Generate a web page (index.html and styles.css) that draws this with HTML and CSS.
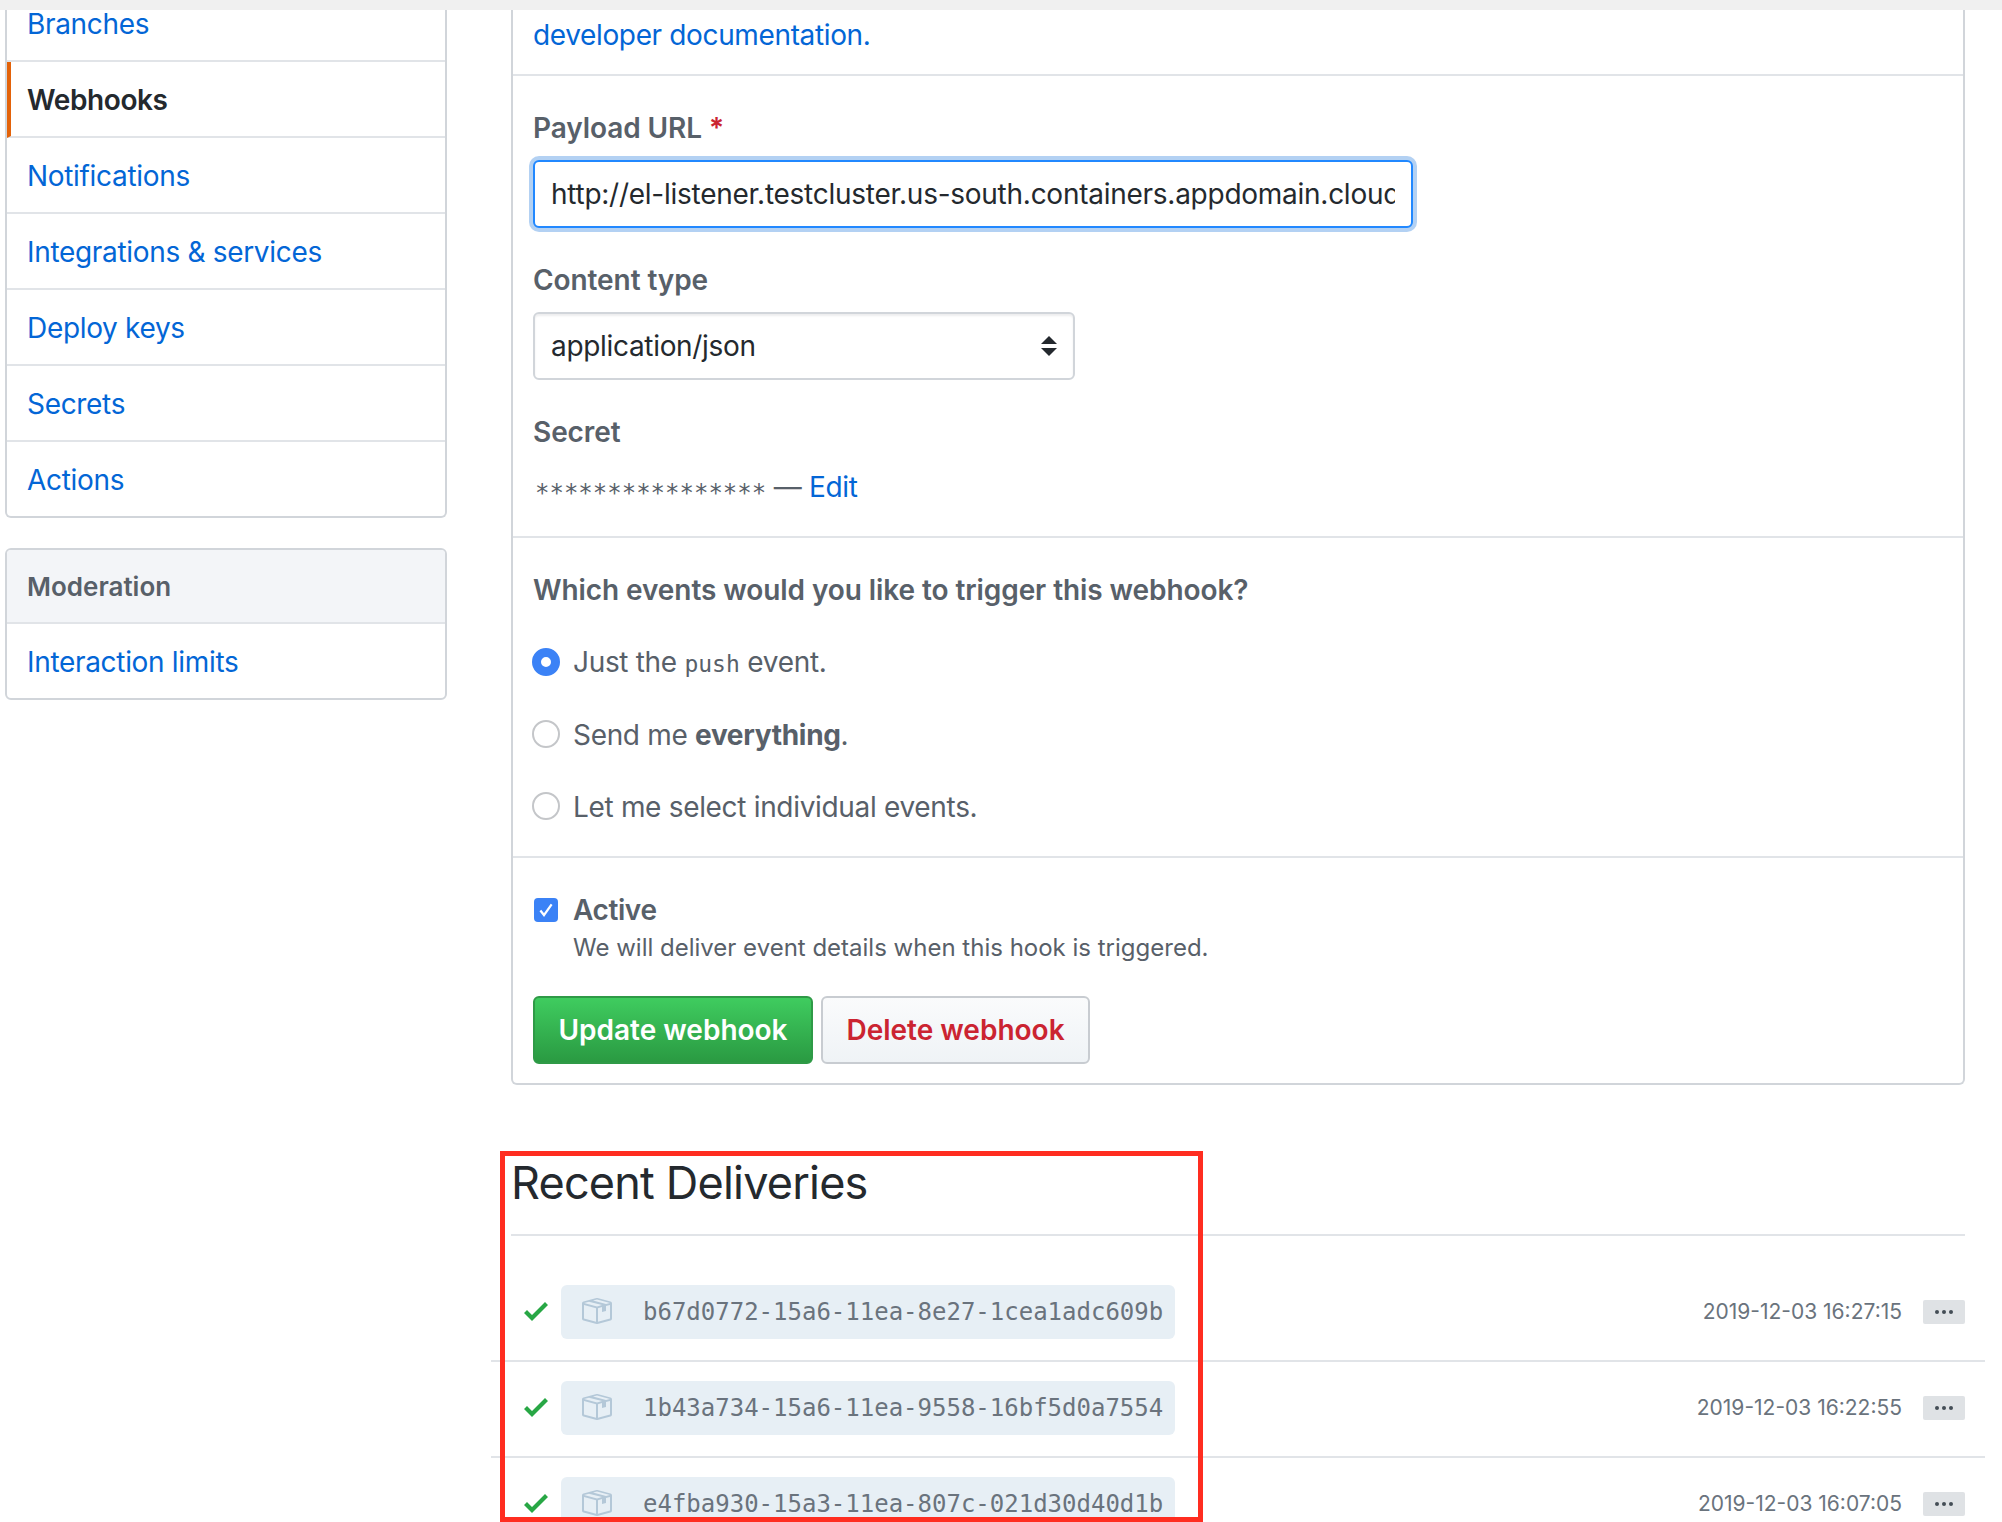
FILE: index.html
```html
<!DOCTYPE html>
<html lang="en">
<head>
    <meta charset="UTF-8">
    <title>Webhooks</title>
    <link rel="stylesheet" href="styles.css">
</head>
<body>
<div class="topband"></div>
<div class="page">
    <div class="side">
        <div class="menu menu-first">
            <a class="menu-item">Branches</a>
            <a class="menu-item selected">Webhooks</a>
            <a class="menu-item">Notifications</a>
            <a class="menu-item">Integrations &amp; services</a>
            <a class="menu-item">Deploy keys</a>
            <a class="menu-item">Secrets</a>
            <a class="menu-item">Actions</a>
        </div>
        <div class="menu">
            <div class="menu-head">Moderation</div>
            <a class="menu-item">Interaction limits</a>
        </div>
    </div>

    <div class="main">
        <div class="card">
            <div class="card-top"><a class="link">developer documentation</a>.</div>

            <div class="card-sec sec-fields">
                <div class="label">Payload URL <span class="req">*</span></div>
                <input class="url-input" type="text" value="http://el-listener.testcluster.us-south.containers.appdomain.cloud/webhook">
                <div class="label label-next">Content type</div>
                <div class="select-box">
                    <span>application/json</span>
                    <svg class="select-arrows" width="16" height="20" viewBox="0 0 16 20"><path d="M8 0l8 8H0zM8 20L0 12h16z"/></svg>
                </div>
                <div class="label label-next">Secret</div>
                <div class="secret"><span class="stars">****************</span> — <a class="link">Edit</a></div>
            </div>

            <div class="card-sec sec-events">
                <div class="label">Which events would you like to trigger this webhook?</div>
                <div class="radios">
                    <div class="radio-row"><span class="radio on"></span><span class="radio-text">Just the <code class="push">push</code> event.</span></div>
                    <div class="radio-row"><span class="radio"></span><span class="radio-text">Send me <b>everything</b>.</span></div>
                    <div class="radio-row"><span class="radio"></span><span class="radio-text">Let me select individual events.</span></div>
                </div>
            </div>

            <div class="card-sec sec-active">
                <div class="active-row">
                    <span class="check">
                        <svg width="18" height="18" viewBox="0 0 16 16"><path d="M3 8.5l3.2 4L13 3" fill="none" stroke="#fff" stroke-width="2"/></svg>
                    </span>
                    <b class="active-name">Active</b>
                </div>
                <div class="note">We will deliver event details when this hook is triggered.</div>
                <div class="buttons">
                    <button class="btn btn-green">Update webhook</button>
                    <button class="btn btn-red">Delete webhook</button>
                </div>
            </div>
        </div>

        <h2 class="title">Recent Deliveries</h2>

        <div class="deliveries">
            <div class="delivery">
                <svg class="ok" width="24" height="32" viewBox="0 0 12 16"><path d="M12 5l-8 8-4-4 1.5-1.5L4 10l6.5-6.5L12 5z"/></svg>
                <div class="guid">
                    <svg class="pkg" width="32" height="32" viewBox="0 0 16 16"><path d="M1 4.27v7.47c0 .45.3.84.75.97l6.5 1.73c.16.05.34.05.5 0l6.5-1.73c.45-.13.75-.52.75-.97V4.27c0-.45-.3-.84-.75-.97l-6.5-1.74a1.4 1.4 0 0 0-.5 0L1.75 3.3c-.45.13-.75.52-.75.97zm7 9.09l-6-1.59V5l6 1.61v6.75zM2 4l2.5-.67L11 5.06l-2.5.67L2 4zm13 7.77l-6 1.59V6.61l2-.55V8.5l2-.53V5.53L15 5v6.77zm-2-7.24L6.5 2.8l2-.53L15 4l-2 .53z"/></svg>
                    <span>b67d0772-15a6-11ea-8e27-1cea1adc609b</span>
                </div>
                <span class="time">2019-12-03 16:27:15</span>
                <span class="more"><i></i><i></i><i></i></span>
            </div>
            <div class="delivery">
                <svg class="ok" width="24" height="32" viewBox="0 0 12 16"><path d="M12 5l-8 8-4-4 1.5-1.5L4 10l6.5-6.5L12 5z"/></svg>
                <div class="guid">
                    <svg class="pkg" width="32" height="32" viewBox="0 0 16 16"><path d="M1 4.27v7.47c0 .45.3.84.75.97l6.5 1.73c.16.05.34.05.5 0l6.5-1.73c.45-.13.75-.52.75-.97V4.27c0-.45-.3-.84-.75-.97l-6.5-1.74a1.4 1.4 0 0 0-.5 0L1.75 3.3c-.45.13-.75.52-.75.97zm7 9.09l-6-1.59V5l6 1.61v6.75zM2 4l2.5-.67L11 5.06l-2.5.67L2 4zm13 7.77l-6 1.59V6.61l2-.55V8.5l2-.53V5.53L15 5v6.77zm-2-7.24L6.5 2.8l2-.53L15 4l-2 .53z"/></svg>
                    <span>1b43a734-15a6-11ea-9558-16bf5d0a7554</span>
                </div>
                <span class="time">2019-12-03 16:22:55</span>
                <span class="more"><i></i><i></i><i></i></span>
            </div>
            <div class="delivery">
                <svg class="ok" width="24" height="32" viewBox="0 0 12 16"><path d="M12 5l-8 8-4-4 1.5-1.5L4 10l6.5-6.5L12 5z"/></svg>
                <div class="guid">
                    <svg class="pkg" width="32" height="32" viewBox="0 0 16 16"><path d="M1 4.27v7.47c0 .45.3.84.75.97l6.5 1.73c.16.05.34.05.5 0l6.5-1.73c.45-.13.75-.52.75-.97V4.27c0-.45-.3-.84-.75-.97l-6.5-1.74a1.4 1.4 0 0 0-.5 0L1.75 3.3c-.45.13-.75.52-.75.97zm7 9.09l-6-1.59V5l6 1.61v6.75zM2 4l2.5-.67L11 5.06l-2.5.67L2 4zm13 7.77l-6 1.59V6.61l2-.55V8.5l2-.53V5.53L15 5v6.77zm-2-7.24L6.5 2.8l2-.53L15 4l-2 .53z"/></svg>
                    <span>e4fba930-15a3-11ea-807c-021d30d40d1b</span>
                </div>
                <span class="time">2019-12-03 16:07:05</span>
                <span class="more"><i></i><i></i><i></i></span>
            </div>
        </div>
    </div>
</div>
<!-- red annotation frame drawn over the screenshot -->
<div class="annotation"></div>
</body>
</html>
```

FILE: styles.css
```css
* {
    box-sizing: border-box;
}

html, body {
    margin: 0;
    padding: 0;
    height: 1522px;
    overflow: hidden;
    background: #fff;
}

body {
    font-family: "Inter", "Liberation Sans", sans-serif;
    font-size: 28px;
    line-height: 36px;
    letter-spacing: -0.32px;
    color: #24292e;
    position: relative;
}

.topband {
    height: 10px;
    background: #f0f0f0;
}

.page {
    display: flex;
    height: 1512px;
    padding-left: 5px;
}

/* left menu */
.side {
    width: 442px;
    flex: none;
    margin-right: 64px;
}

.menu {
    border: 2px solid #d1d5da;
    border-radius: 6px;
    margin-bottom: 30px;
    overflow: hidden;
}

.menu-first {
    border-top: 0;
    border-top-left-radius: 0;
    border-top-right-radius: 0;
    overflow: visible;
}

.menu-item {
    display: flex;
    align-items: center;
    height: 76px;
    padding: 2px 0 0 20px;
    color: #0366d6;
    border-bottom: 2px solid #e1e4e8;
}

.menu-item:last-child {
    border-bottom: 0;
    height: 74px;
}

/* Branches is the row cut by the top of the screenshot */
.menu-first .menu-item:first-child {
    height: 52px;
    padding-top: 0;
    align-items: flex-start;
    line-height: 28px;
}

.menu-item.selected {
    color: #24292e;
    font-weight: 600;
    letter-spacing: -0.4px;
    border-left: 4px solid #e36209;
    padding-left: 16px;
}

.menu-head {
    height: 74px;
    display: flex;
    align-items: center;
    padding: 2px 0 0 20px;
    font-size: 26px;
    font-weight: 600;
    letter-spacing: 0;
    color: #586069;
    background: #f3f5f8;
    border-bottom: 2px solid #e1e4e8;
}

/* main column */
.main {
    width: 1454px;
    flex: none;
}

.card {
    border: 2px solid #d1d5da;
    border-top: 0;
    border-radius: 0 0 6px 6px;
}

.card-top {
    height: 64px;
    padding: 7px 20px 0;
    letter-spacing: -0.36px;
    color: #0366d6;
}

.card-sec {
    border-top: 2px solid #e1e4e8;
    padding: 34px 20px 0;
    color: #586069;
}

.link {
    color: #0366d6;
}

.label {
    font-weight: 600;
    letter-spacing: -0.08px;
    color: #586069;
}

.label-next {
    margin-top: 34px;
}

.req {
    color: #cb2431;
}

.sec-fields {
    height: 462px;
}

.url-input {
    display: block;
    width: 880px;
    height: 68px;
    margin-top: 14px;
    padding: 0 16px;
    font-family: inherit;
    font-size: 28px;
    letter-spacing: -0.26px;
    color: #24292e;
    border: 2px solid #2188ff;
    border-radius: 6px;
    outline: 0;
    box-shadow: 0 0 0 4px rgba(3, 102, 214, 0.3);
}

.select-box {
    position: relative;
    width: 542px;
    height: 68px;
    margin-top: 14px;
    padding: 0 16px;
    display: flex;
    align-items: center;
    justify-content: space-between;
    color: #24292e;
    border: 2px solid #d1d5da;
    border-radius: 6px;
    box-shadow: inset 0 2px 2px rgba(27, 31, 35, 0.075);
}

.select-arrows {
    fill: #24292e;
}

.secret {
    margin-top: 19px;
    padding-left: 2px;
}

.stars {
    font-family: "DejaVu Sans Mono", monospace;
    font-size: 24px;
    letter-spacing: 0;
    position: relative;
    top: 4px;
}

.sec-events {
    height: 320px;
}

.radios {
    margin: 36px 0 0 -1px;
    display: flex;
    flex-direction: column;
    gap: 36px;
}

.radio-row {
    display: flex;
    align-items: center;
    gap: 13px;
    height: 36px;
}

.radio-text {
    padding-top: 1px;
}

.radio {
    width: 28px;
    height: 28px;
    flex: none;
    border-radius: 50%;
    border: 2px solid #c4c6c9;
    background: #fff;
}

.radio.on {
    border: 9px solid #3b82f6;
}

.push {
    font-family: "DejaVu Sans Mono", monospace;
    font-size: 23px;
    letter-spacing: 0;
}

.sec-active {
    height: 227px;
}

.active-row {
    display: flex;
    align-items: center;
    gap: 15px;
    padding-left: 1px;
}

.check {
    width: 24px;
    height: 24px;
    flex: none;
    display: flex;
    align-items: center;
    justify-content: center;
    border-radius: 4px;
    background: #3b82f6;
}

.active-name {
    font-weight: 600;
    letter-spacing: -0.4px;
}

.note {
    margin-top: 4px;
    padding-left: 40px;
    font-size: 24px;
    line-height: 32px;
    letter-spacing: 0;
}

.buttons {
    display: flex;
    gap: 8px;
    margin-top: 32px;
}

.btn {
    height: 68px;
    font-family: inherit;
    font-size: 28px;
    font-weight: 600;
    letter-spacing: 0;
    border-radius: 6px;
    padding: 0;
}

.btn-green {
    width: 280px;
    color: #fff;
    background: linear-gradient(#3fcc5f, #2a9a42);
    border: 2px solid #2f9a47;
}

.btn-red {
    width: 269px;
    color: #cb2431;
    background: linear-gradient(#fafbfc, #eff3f6);
    border: 2px solid #c8ccd1;
}

/* recent deliveries */
.title {
    margin: 70px 0 0;
    padding-bottom: 23px;
    font-size: 45px;
    line-height: 56px;
    font-weight: 400;
    letter-spacing: -0.8px;
    color: #24292e;
    border-bottom: 2px solid #e1e4e8;
}

.deliveries {
    margin: 30px -20px 0;
}

.delivery {
    display: flex;
    align-items: center;
    height: 96px;
    padding: 0 20px 2px 33px;
    border-bottom: 2px solid #e1e4e8;
}

.ok {
    flex: none;
    fill: #28a745;
    margin: -3px 13px 0 0;
}

.guid {
    flex: none;
    display: flex;
    align-items: center;
    width: 614px;
    height: 54px;
    padding-left: 19px;
    background: #e7eff5;
    border-radius: 6px;
    font-family: "DejaVu Sans Mono", monospace;
    font-size: 24px;
    letter-spacing: 0;
    color: #6a737d;
}

.pkg {
    flex: none;
    fill: #b4c8d8;
    margin: -3px 31px 0 0;
}

.time {
    margin-left: auto;
    font-size: 21px;
    letter-spacing: 0;
    color: #6a737d;
}

.more {
    flex: none;
    width: 42px;
    height: 24px;
    margin-left: 21px;
    display: flex;
    align-items: center;
    justify-content: center;
    gap: 3px;
    background: #dfe2e5;
    border-radius: 2px;
}

.more i {
    width: 4px;
    height: 4px;
    border-radius: 50%;
    background: #444d56;
}

.annotation {
    position: absolute;
    left: 500px;
    top: 1151px;
    width: 703px;
    height: 371px;
    border: 5px solid #ff2d20;
}
```
